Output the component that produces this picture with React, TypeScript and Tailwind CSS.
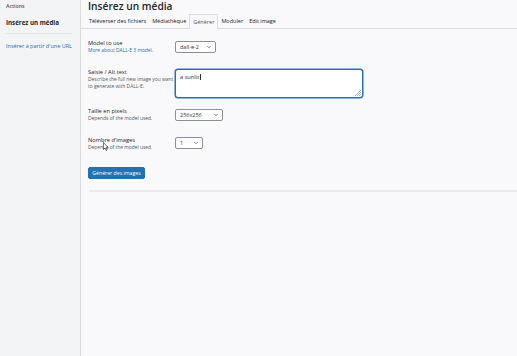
import { ChevronDown } from 'lucide-react';

const font = { fontFamily: '"Open Sans", "Noto Sans", Arial, sans-serif' };

function FakeSelect({ value, width }: { value: string; width: string }) {
  return (
    <div
      className={`flex h-[12px] items-center justify-between rounded-[2px] border border-[#8c8f94] bg-white pl-[4px] pr-[3px] text-[5.5px] leading-[6px] text-[#2c3338] ${width}`}
    >
      <span>{value}</span>
      <ChevronDown className="h-[6px] w-[6px] text-[#50575e]" strokeWidth={3} />
    </div>
  );
}

function FieldLabel({ title, children }: { title: string; children?: React.ReactNode }) {
  return (
    <div className="w-[87px] shrink-0">
      <div className="text-[5.7px] leading-[7px] text-[#1d2327]">{title}</div>
      {children}
    </div>
  );
}

const tabs = ['Téléverser des fichiers', 'Médiathèque', 'Générer', 'Moduler', 'Edit image'];

export default function App() {
  return (
    <div className="flex h-[356px] w-full overflow-hidden bg-[#f9f9fb] text-[6px] leading-[7px]" style={font}>
      {/* sidebar */}
      <aside className="flex w-[81px] shrink-0 flex-col border-r border-[#dcdcde] bg-[#f3f4f6] px-[6px]">
        <div className="mt-[3px] text-[5.2px] font-semibold leading-[6px] text-[#50575e]">Actions</div>
        <div className="mt-[10px] text-[6.2px] font-bold leading-[8px] text-[#1d2327]">Insérez un média</div>
        <div className="mt-[6px] h-px w-[66px] bg-[#e2e4e7]" />
        <a className="mt-[8px] whitespace-nowrap text-[5.5px] leading-[8px] text-[#2271b1]">
          Insérer à partir d'une URL
        </a>
      </aside>

      {/* main */}
      <main className="relative flex flex-1 flex-col">
        <h1 className="h-[14px] pl-[7px] text-[10.2px] font-semibold leading-[12px] text-[#1d2327]">
          Insérez un média
        </h1>

        <nav className="flex h-[15px] items-end border-b border-[#dcdcde] pl-[5px]">
          {tabs.map((t) =>
            t === 'Générer' ? (
              <span
                key={t}
                className="-mb-px flex h-[15px] items-center border border-b-0 border-[#dcdcde] bg-[#f9f9fb] px-[3px] text-[5.5px] text-[#50575e]"
              >
                {t}
              </span>
            ) : (
              <span key={t} className="flex h-[14px] items-center px-[3px] text-[5.5px] text-[#1d2327]">
                {t}
              </span>
            )
          )}
        </nav>

        <div className="flex flex-col pl-[7px]">
          <div className="mt-[11px] flex items-start">
            <FieldLabel title="Model to use">
              <a className="block text-[4.9px] leading-[7px] text-[#2271b1]">More about DALL-E 3 model.</a>
            </FieldLabel>
            <div className="mt-[1px]">
              <FakeSelect value="dall-e-2" width="w-[41px]" />
            </div>
          </div>

          <div className="mt-[15px] flex items-start">
            <FieldLabel title="Saisie / Alt text">
              <div className="whitespace-nowrap text-[4.9px] leading-[7px] text-[#50575e]">
                Describe the full new image you want
                <br />
                to generate with DALL-E.
              </div>
            </FieldLabel>
            <div className="relative h-[29px] w-[188px] rounded-[3px] border border-[#2271b1] bg-white px-[4px] pt-[3px] text-[5.7px] leading-[7px] text-[#2c3338] shadow-[0_0_0_0.5px_#2271b1]">
              a sunlit
              <span className="ml-[0.5px] inline-block h-[6px] w-[0.7px] translate-y-[1px] bg-[#2c3338]" />
              <svg className="absolute bottom-[1px] right-[1px]" width="6" height="6" viewBox="0 0 6 6">
                <path d="M6 0 L0 6 M6 2 L2 6 M6 4 L4 6" stroke="#8c8f94" strokeWidth="0.7" />
              </svg>
            </div>
          </div>

          <div className="mt-[10px] flex items-start">
            <FieldLabel title="Taille en pixels">
              <div className="text-[4.9px] leading-[6px] text-[#50575e]">Depends of the model used.</div>
            </FieldLabel>
            <div className="mt-[1px]">
              <FakeSelect value="256x256" width="w-[48px]" />
            </div>
          </div>

          <div className="relative mt-[16px] flex items-start">
            <FieldLabel title="Nombre d'images">
              <div className="text-[4.9px] leading-[6px] text-[#50575e]">Depends of the model used.</div>
            </FieldLabel>
            <div>
              <FakeSelect value="1" width="w-[28px]" />
            </div>
            {/* mouse pointer */}
            <svg className="absolute left-[15px] top-[5px]" width="6" height="9" viewBox="0 0 6 9">
              <path d="M0.5 0.5 L0.5 7.5 L2 6 L3.2 8.5 L4.2 8 L3 5.6 L5.2 5.6 Z" fill="white" stroke="#1d2327" strokeWidth="0.6" />
            </svg>
          </div>

          <button className="mt-[17px] block h-[12px] w-[57px] rounded-[2px] border border-[#2271b1] bg-[#2271b1] text-[5.2px] leading-[10px] text-white">
            Générer des images
          </button>
        </div>

        <div className="ml-[8px] mt-[11px] h-[2px] bg-[#ececf0]" />
      </main>
    </div>
  );
}
